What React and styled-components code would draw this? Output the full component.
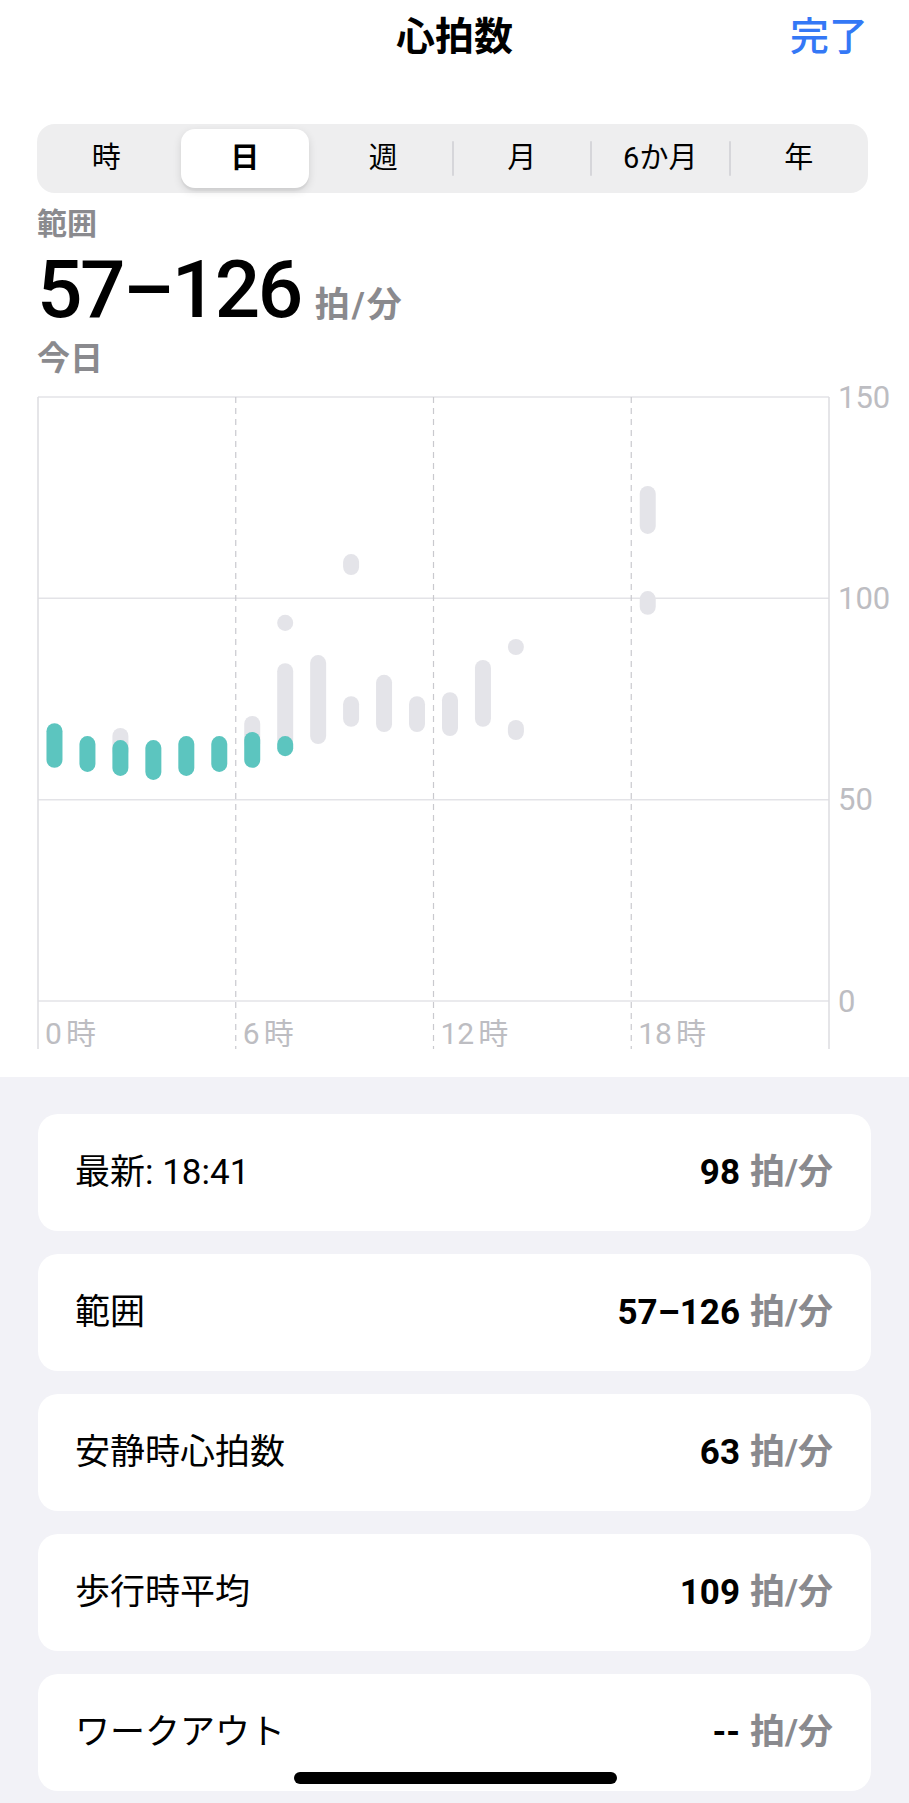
import React from "react"
import styled, { createGlobalStyle } from "styled-components"

const GlobalStyle = createGlobalStyle`
  html, body {
    margin: 0;
    padding: 0;
    background: #f2f2f7;
  }
  body {
    font-family: Roboto, "Noto Sans CJK JP", sans-serif;
    color: #000;
    -webkit-font-smoothing: antialiased;
  }
`

const Page = styled.div`
  width: 100%;
  min-height: 100vh;
  background: #f2f2f7;
`

const TopSection = styled.div`
  background: #fff;
`

const Nav = styled.div`
  display: grid;
  grid-template-columns: 1fr auto 1fr;
  align-items: center;
  height: 74px;
  padding: 0 41px;
`

const Title = styled.div`
  grid-column: 2;
  font-size: 39px;
  line-height: 39px;
  font-weight: 700;
`

const Done = styled.div`
  justify-self: end;
  font-size: 39px;
  line-height: 39px;
  font-weight: 500;
  color: #3478f6;
`

const Header = styled.div`
  padding: 0 41px 0 37px;
`

const Segmented = styled.div`
  display: grid;
  grid-template-columns: repeat(6, 1fr);
  height: 69px;
  margin-top: 50px;
  background: #eeeeef;
  border-radius: 18px;
`

const Segment = styled.div`
  position: relative;
  display: flex;
  align-items: center;
  justify-content: center;
  margin: 5px;
  border-radius: 14px;
  font-size: 29px;
  line-height: 1;
  font-weight: ${(p) => (p.$active ? 700 : 400)};
  background: ${(p) => (p.$active ? "#fff" : "transparent")};
  box-shadow: ${(p) =>
    p.$active ? "0 3px 8px rgba(0,0,0,0.12), 0 3px 1px rgba(0,0,0,0.04)" : "none"};

  &::before {
    content: "";
    display: ${(p) => (p.$sep ? "block" : "none")};
    position: absolute;
    left: -6px;
    top: 12px;
    bottom: 12px;
    width: 2px;
    border-radius: 1px;
    background: #d6d6da;
  }
`

const Caption = styled.div`
  margin-top: ${(p) => p.$top}px;
  font-size: ${(p) => p.$size}px;
  line-height: ${(p) => p.$size + 3}px;
  font-weight: 700;
  color: #8a8a8e;
`

const BigValue = styled.div`
  margin-top: 10px;
  font-size: 80px;
  line-height: 80px;
  font-weight: 500;
  letter-spacing: -2.5px;
`

const BigUnit = styled.span`
  margin-left: 14px;
  font-size: 35px;
  line-height: 1;
  font-weight: 700;
  letter-spacing: 2px;
  color: #8a8a8e;
`

const ChartSvg = styled.svg`
  display: block;
  margin: 10px 0 0 38px;
  overflow: visible;
`

const Stats = styled.div`
  display: flex;
  flex-direction: column;
  gap: 23px;
  padding: 37px 38px 11px;
`

const Card = styled.div`
  display: flex;
  align-items: center;
  justify-content: space-between;
  height: 117px;
  padding: 0 38px 0 37px;
  background: #fff;
  border-radius: 20px;
  font-size: 35px;
  line-height: 40px;
`

const CardLabel = styled.span`
  font-weight: 400;
`

const CardValue = styled.span`
  font-weight: 700;
`

const CardUnit = styled.span`
  margin-left: 10px;
  font-weight: 700;
  color: #8a8a8e;
`

const HomeIndicator = styled.div`
  position: fixed;
  left: 50%;
  bottom: 19px;
  width: 323px;
  height: 12px;
  margin-left: -161px;
  border-radius: 6px;
  background: #000;
`

const segments = ["時", "日", "週", "月", "6か月", "年"]
const activeSeg = 1

const W = 791
const TOP = 10
const BOT = 614
const LINE_END = 662
const yOf = (v) => BOT - (v * (BOT - TOP)) / 150
const xOf = (h) => ((h + 0.5) * W) / 24

// [hour, high, low] in bpm
const grayBars = [
  [2, 67.8, 60],
  [6, 70.8, 62],
  [7, 95.9, 91.9],
  [7, 83.9, 63],
  [8, 85.9, 63.8],
  [9, 111, 105.8],
  [9, 75.7, 68.1],
  [10, 81, 66.8],
  [11, 75.7, 66.8],
  [12, 76.7, 65.8],
  [13, 84.7, 68.1],
  [14, 89.9, 85.9],
  [14, 69.8, 64.8],
  [18, 127.9, 116],
  [18, 101.8, 95.9],
]

const tealBars = [
  [0, 69, 57.9],
  [1, 65.8, 56.9],
  [2, 64.8, 55.9],
  [3, 64.8, 54.9],
  [4, 65.8, 55.9],
  [5, 65.8, 56.9],
  [6, 66.8, 57.9],
  [7, 65.8, 60.8],
]

const stats = [
  { label: "最新: 18:41", value: "98" },
  { label: "範囲", value: "57–126" },
  { label: "安静時心拍数", value: "63" },
  { label: "歩行時平均", value: "109" },
  { label: "ワークアウト", value: "--" },
]

function Bar({ h, hi, lo, color }) {
  const y1 = yOf(hi)
  const y2 = yOf(lo)
  return <rect x={xOf(h) - 8} y={y1} width={16} height={y2 - y1} rx={8} fill={color} />
}

function Chart() {
  const textStyle = { fontFamily: 'Roboto, "Noto Sans CJK JP", sans-serif' }
  return (
    <ChartSvg width={871} height={690} viewBox="0 0 871 690">
      {[0, 50, 100, 150].map((v) => (
        <line key={v} x1={0} x2={W} y1={yOf(v)} y2={yOf(v)} stroke="#e3e3e7" strokeWidth={1.5} />
      ))}
      <line x1={0} x2={0} y1={TOP} y2={LINE_END} stroke="#dcdce0" strokeWidth={1.5} />
      <line x1={W} x2={W} y1={TOP} y2={LINE_END} stroke="#dcdce0" strokeWidth={1.5} />
      {[1, 2, 3].map((i) => (
        <line
          key={i}
          x1={(i * W) / 4}
          x2={(i * W) / 4}
          y1={TOP}
          y2={LINE_END}
          stroke="#c9c9ce"
          strokeWidth={1.2}
          strokeDasharray="6 5"
        />
      ))}
      {grayBars.map(([h, hi, lo], i) => (
        <Bar key={"g" + i} h={h} hi={hi} lo={lo} color="#e4e4e9" />
      ))}
      {tealBars.map(([h, hi, lo], i) => (
        <Bar key={"t" + i} h={h} hi={hi} lo={lo} color="#5cc5bf" />
      ))}
      {[0, 50, 100, 150].map((v) => (
        <text
          key={v}
          x={W + 9}
          y={yOf(v)}
          dominantBaseline="central"
          fontSize={31}
          fill="#bdbdc2"
          style={textStyle}
        >
          {v}
        </text>
      ))}
      {[0, 6, 12, 18].map((h, i) => (
        <text key={h} x={(i * W) / 4 + 7} y={657} fontSize={30} fill="#bdbdc2" style={textStyle}>
          <tspan>{h}</tspan>
          <tspan dx={4}>時</tspan>
        </text>
      ))}
    </ChartSvg>
  )
}

export default function App() {
  return (
    <Page>
      <GlobalStyle />
      <TopSection>
        <Nav>
          <Title>心拍数</Title>
          <Done>完了</Done>
        </Nav>
        <Header>
          <Segmented>
            {segments.map((s, i) => (
              <Segment
                key={s}
                $active={i === activeSeg}
                $sep={i > 0 && i !== activeSeg && i - 1 !== activeSeg}
              >
                {s}
              </Segment>
            ))}
          </Segmented>
          <Caption $top={14} $size={30}>範囲</Caption>
          <BigValue>
            57–126<BigUnit>拍/分</BigUnit>
          </BigValue>
          <Caption $top={11} $size={33}>今日</Caption>
        </Header>
        <Chart />
      </TopSection>
      <Stats>
        {stats.map((s) => (
          <Card key={s.label}>
            <CardLabel>{s.label}</CardLabel>
            <span>
              <CardValue>{s.value}</CardValue>
              <CardUnit>拍/分</CardUnit>
            </span>
          </Card>
        ))}
      </Stats>
      <HomeIndicator />
    </Page>
  )
}
